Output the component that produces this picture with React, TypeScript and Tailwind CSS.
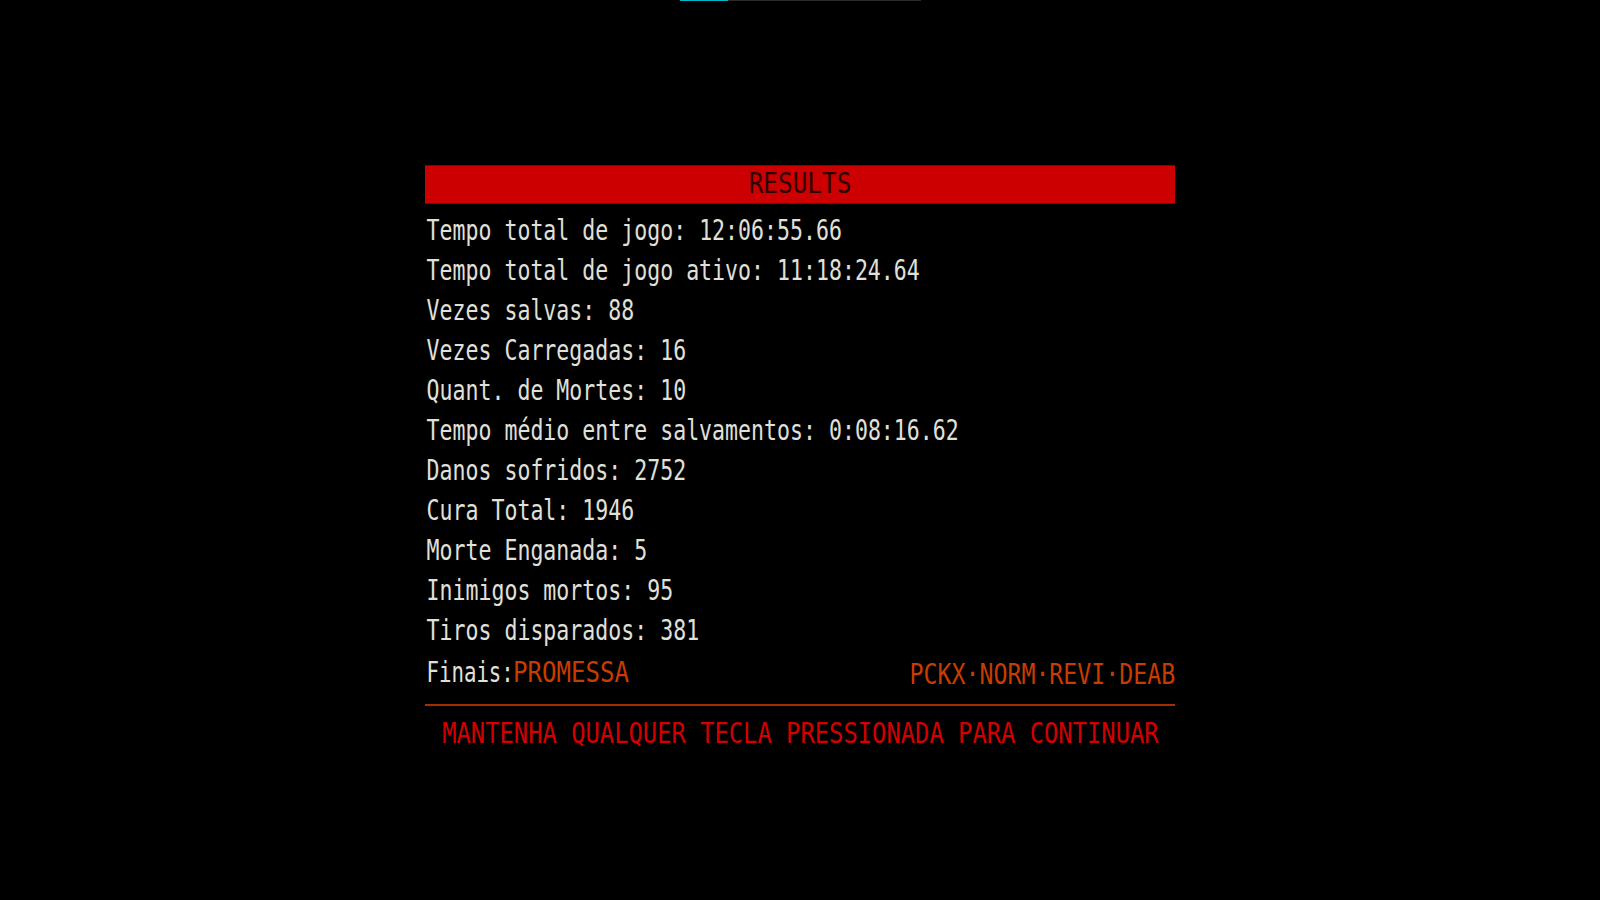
const stats: [string, string][] = [
  ["Tempo total de jogo", "12:06:55.66"],
  ["Tempo total de jogo ativo", "11:18:24.64"],
  ["Vezes salvas", "88"],
  ["Vezes Carregadas", "16"],
  ["Quant. de Mortes", "10"],
  ["Tempo médio entre salvamentos", "0:08:16.62"],
  ["Danos sofridos", "2752"],
  ["Cura Total", "1946"],
  ["Morte Enganada", "5"],
  ["Inimigos mortos", "95"],
  ["Tiros disparados", "381"],
];

const font = "font-['DejaVu_Sans_Mono','Liberation_Mono',monospace] text-[28px]";

const App = () => {
  return (
    <div className="min-h-[900px] w-full bg-black">
      <div className="mx-auto flex h-px w-[241px]">
        <div className="w-[48px] bg-[#00b4c8]" />
        <div className="flex-1 bg-[#2a2a2a]" />
      </div>

      <div className={`mx-auto mt-[164px] w-[750px] ${font}`}>
        <div className="flex h-[39px] justify-center border-y border-[#8c0000] bg-[#cc0000] leading-[35px]">
          <span className="block w-max origin-center scale-x-[0.87] text-[#2e0000]">RESULTS</span>
        </div>

        <div className="mt-[7px] leading-[40px] text-[#e0e0da]">
          {stats.map(([label, value]) => (
            <div key={label} className="w-max origin-left scale-x-[0.77] whitespace-nowrap pl-[2px]">
              {label}: {value}
            </div>
          ))}
          <div className="flex items-center justify-between">
            <div className="flex">
              <span className="block w-[88px] shrink-0 origin-left scale-x-[0.74] whitespace-nowrap pl-[2px]">
                Finais:
              </span>
              <span className="block w-max origin-left scale-x-[0.86] text-[#c83c00]">PROMESSA</span>
            </div>
            <span className="mt-[4px] block w-max origin-right scale-x-[0.83] text-[#c83c00]">
              PCKX·NORM·REVI·DEAB
            </span>
          </div>
        </div>

        <div className="mt-[9px] h-[2px] bg-[#a42e00]" />

        <div className="mt-[8px] flex justify-center leading-[40px]">
          <span className="block w-max shrink-0 origin-center scale-x-[0.85] whitespace-nowrap text-[#d40000]">
            MANTENHA QUALQUER TECLA PRESSIONADA PARA CONTINUAR
          </span>
        </div>
      </div>
    </div>
  );
};

export default App;
